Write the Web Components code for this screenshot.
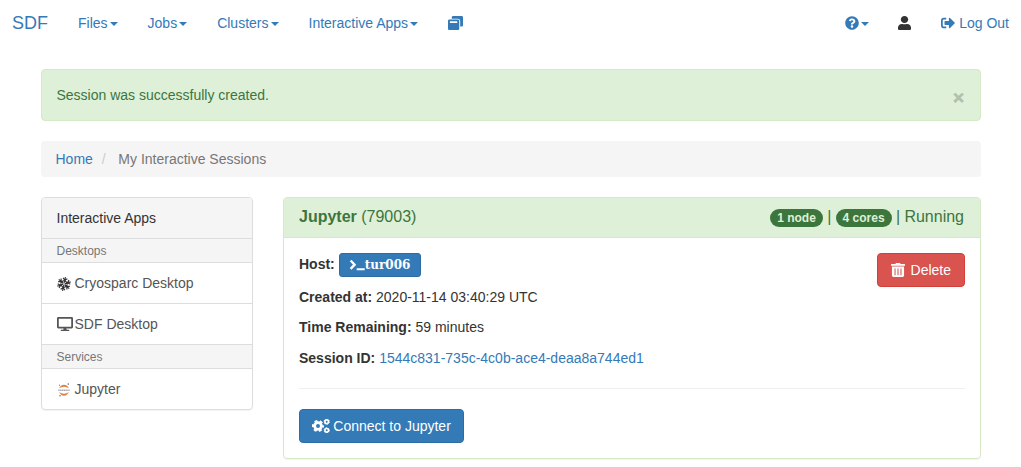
<!DOCTYPE html>
<html lang="en">
<head>
<meta charset="utf-8">
<title>My Interactive Sessions - SDF</title>
<style>
body{margin:0;background:#fff;color:#333;font:14px/20px "Liberation Sans",Arial,sans-serif;}
</style>
</head>
<body>
<sdf-page></sdf-page>
<script>
const define=(name,html)=>{
  const t=document.createElement('template');t.innerHTML=html;
  customElements.define(name,class extends HTMLElement{
    constructor(){super();this.attachShadow({mode:'open'}).append(t.content.cloneNode(true));}
  });
};

const ICONS={
 help:[512,512,'<path d="M504 256c0 136.997-111.043 248-248 248S8 392.997 8 256C8 119.083 119.043 8 256 8s248 111.083 248 248zM262.655 90c-54.497 0-89.255 22.957-116.549 63.758-3.536 5.286-2.353 12.415 2.715 16.258l34.699 26.31c5.205 3.947 12.621 3.008 16.665-2.122 17.864-22.658 30.113-35.797 57.303-35.797 20.429 0 45.698 13.148 45.698 32.958 0 14.976-12.363 22.667-32.534 33.976C247.128 238.528 216 254.941 216 296v4c0 6.627 5.373 12 12 12h56c6.627 0 12-5.373 12-12v-1.333c0-28.462 83.186-29.647 83.186-106.667 0-58.002-60.165-102-116.531-102zM256 338c-25.365 0-46 20.635-46 46 0 25.364 20.635 46 46 46s46-20.636 46-46c0-25.365-20.635-46-46-46z"/>'],
 user:[448,512,'<path d="M224 256c70.7 0 128-57.3 128-128S294.7 0 224 0 96 57.3 96 128s57.3 128 128 128zm89.6 32h-16.7c-22.2 10.2-46.9 16-72.9 16s-50.6-5.8-72.9-16h-16.7C60.2 288 0 348.2 0 422.4V464c0 26.5 21.5 48 48 48h352c26.5 0 48-21.5 48-48v-41.6c0-74.2-60.2-134.4-134.4-134.4z"/>'],
 logout:[512,512,'<path d="M497 273L329 441c-15 15-41 4.5-41-17v-96H152c-13.3 0-24-10.7-24-24v-96c0-13.3 10.7-24 24-24h136V88c0-21.4 25.9-32 41-17l168 168c9.3 9.4 9.3 24.6 0 34zM192 436v-40c0-6.6-5.4-12-12-12H96c-17.7 0-32-14.3-32-32V160c0-17.7 14.3-32 32-32h84c6.6 0 12-5.4 12-12V76c0-6.6-5.4-12-12-12H96c-53 0-96 43-96 96v192c0 53 43 96 96 96h84c6.6 0 12-5.4 12-12z"/>'],
 windows:[512,512,'<path d="M512 48v288c0 26.5-21.5 48-48 48h-48V176c0-44.1-35.9-80-80-80H128V48c0-26.5 21.5-48 48-48h288c26.5 0 48 21.5 48 48zM384 176v288c0 26.5-21.5 48-48 48H48c-26.5 0-48-21.5-48-48V176c0-26.5 21.5-48 48-48h288c26.5 0 48 21.5 48 48zm-68 28c0-6.6-5.4-12-12-12H76c-6.6 0-12 5.4-12 12v52h252v-52z"/>'],
 desktop:[576,512,'<path d="M528 0H48C21.5 0 0 21.5 0 48v320c0 26.5 21.5 48 48 48h192l-16 48h-72c-13.3 0-24 10.7-24 24s10.7 24 24 24h272c13.3 0 24-10.7 24-24s-10.7-24-24-24h-72l-16-48h192c26.5 0 48-21.5 48-48V48c0-26.5-21.5-48-48-48zm-16 352H64V64h448v288z"/>'],
 terminal:[16,12,'<path d="M1.6 1.5 5.6 5.7 1.6 9.9" fill="none" stroke="currentColor" stroke-width="2.4"/><path d="M7.7 9.3h8v1.9h-8z"/>'],
 trash:[12,14,'<path fill-rule="evenodd" d="M.5 1H3.7L4.3 0H7.7L8.3 1h3.2q.5 0 .5.5V2.7H0V1.5Q0 1 .5 1zM.8 3.6H11.2V12.6Q11.2 14 9.8 14H2.2Q.8 14 .8 12.6zM3 5.4V12.2H3.9V5.4zM5.55 5.4V12.2h.9V5.4zM8.1 5.4V12.2H9V5.4z"/>'],
 cogs:[18,14,'<g fill="none" stroke="currentColor"><circle cx="6" cy="7" r="3.4" stroke-width="2.8"/><circle cx="6" cy="7" r="5" stroke-width="2.2" stroke-dasharray="2.8 2.436" stroke-dashoffset="1.4"/><circle cx="14.7" cy="2.7" r="1.8" stroke-width="1.6"/><circle cx="14.7" cy="2.7" r="2.6" stroke-width="1" stroke-dasharray="1.5 1.223"/><circle cx="14.7" cy="11.3" r="1.8" stroke-width="1.6"/><circle cx="14.7" cy="11.3" r="2.6" stroke-width="1" stroke-dasharray="1.5 1.223"/></g>'],
 cryo:[14,14,'<g fill="none" stroke="#333" stroke-width="1.15">'+[0,60,120,180,240,300].map(a=>`<path transform="rotate(${a+12} 7 7)" d="M7 6.2V0M4.8 1.1 7 3.2 9.2 1.1M5.6 3.5 7 4.9 8.4 3.5"/>`).join('')+'</g>'],
 jupyter:[14,14,'<g fill="#df8148"><path d="M2.2 5.3Q3.6 1.7 7 1.7t4.8 3.6Q9.8 3.7 7 3.7T2.2 5.3z"/><path d="M2.2 9.1Q3.6 12.7 7 12.7t4.8-3.6Q9.8 10.7 7 10.7T2.2 9.1z"/></g><path d="M1.3 7.2H12.7" stroke="#aaa" stroke-width="1.5" stroke-dasharray="1.4 .4"/><g fill="#777"><circle cx="11.3" cy="1.1" r=".8"/><circle cx="2.5" cy="2.2" r=".6"/><circle cx="3" cy="12.7" r=".8"/></g>']
};
customElements.define('sdf-icon',class extends HTMLElement{
  connectedCallback(){
    if(this.shadowRoot)return;
    const [w,h,body]=ICONS[this.getAttribute('name')];
    this.attachShadow({mode:'open'}).innerHTML=`<style>:host{display:inline-flex;flex:none}svg{display:block;width:100%;height:100%;fill:currentColor}</style><svg viewBox="0 0 ${w} ${h}" preserveAspectRatio="none">${body}</svg>`;
  }
});

define('nav-link',`<style>
:host{display:flex;align-items:center;color:#337ab7;height:20px}
i{display:none;margin-left:2px;border-top:4px solid;border-left:4px solid transparent;border-right:4px solid transparent}
:host([caret]) i{display:block;margin-top:2px}
</style><slot></slot><i></i>`);

define('sdf-nav',`<style>
:host{display:flex;align-items:center;height:46px;padding:0 12px;box-sizing:border-box}
.brand{font-size:18px;width:66px;color:#337ab7}
.links{display:flex;gap:30px}
.right{margin-left:auto;display:flex;align-items:center;gap:29px}
.sq{width:14px;height:14px}
</style>
<div class="brand">SDF</div>
<div class="links"><nav-link caret>Files</nav-link><nav-link caret>Jobs</nav-link><nav-link caret>Clusters</nav-link><nav-link caret>Interactive Apps</nav-link><nav-link><sdf-icon class="sq" name="windows" style="width:15px"></sdf-icon></nav-link></div>
<div class="right"><nav-link caret><sdf-icon class="sq" name="help"></sdf-icon></nav-link><nav-link style="color:#333"><sdf-icon name="user" style="width:13px;height:14px;margin-right:1px"></sdf-icon></nav-link><nav-link><sdf-icon class="sq" name="logout" style="margin-right:4px"></sdf-icon>Log Out</nav-link></div>`);

define('sdf-alert',`<style>
:host{display:flex;justify-content:space-between;box-sizing:border-box;height:52px;padding:15px 15px 15px 14.5px;border:1px solid #d6e9c6;border-radius:4px;background:#dff0d8;color:#3c763d}
b{font-size:19px;line-height:26px;color:#b2c0ad;margin-right:1px;-webkit-text-stroke:.6px #b2c0ad}
</style><span><slot></slot></span><b>×</b>`);

define('sdf-breadcrumb',`<style>
:host{display:flex;height:36px;box-sizing:border-box;padding:8px 14.5px;border-radius:4px;background:#f5f5f5;color:#777;margin:20px 0}
a{color:#337ab7}i{font-style:normal;color:#ccc;margin:0 12.6px 0 9px}
</style><a>Home</a><i>/</i><span><slot></slot></span>`);

define('app-item',`<style>
:host{display:flex;align-items:center;height:41px;box-sizing:border-box;padding:0 14.5px;border-top:1px solid #ddd;color:#555}
:host([small]){height:24px;font-size:12px;background:#f5f5f5;color:#777}
:host([head]){border:0;background:#f5f5f5;color:#333;height:40px}
::slotted(sdf-icon){margin-right:4px}
</style><slot></slot>`);

define('app-list',`<style>
:host{display:block;box-sizing:border-box;width:212px;border:1px solid #ddd;border-radius:4px;overflow:hidden;box-shadow:0 1px 1px rgba(0,0,0,.05)}
</style>
<app-item head>Interactive Apps</app-item>
<app-item small>Desktops</app-item>
<app-item><sdf-icon name="cryo" style="width:14px;height:14px;margin-top:2px"></sdf-icon>Cryosparc Desktop</app-item>
<app-item><sdf-icon name="desktop" style="width:16px;height:14px;margin-right:2px"></sdf-icon>SDF Desktop</app-item>
<app-item small>Services</app-item>
<app-item><sdf-icon name="jupyter" style="width:14px;height:14px;margin-top:2px"></sdf-icon>Jupyter</app-item>`);

define('sdf-button',`<style>
:host{display:inline-flex;align-items:center;box-sizing:border-box;height:34px;padding:0 12px;border:1px solid #2e6da4;border-radius:4px;background:#337ab7;color:#fff}
:host([danger]){padding:0 13px;background:#d9534f;border-color:#d43f3a}
:host([small]){height:24px;padding:0 9.5px 0 9px;border-radius:3px;font:bold 12px/18px "DejaVu Serif",serif}
</style><slot></slot>`);

define('sdf-badge',`<style>
:host{display:inline-block;box-sizing:border-box;height:18px;padding:0 7px;border-radius:9px;background:#3c763d;color:#dff0d8;font:bold 12px/18px "Liberation Sans",sans-serif}
</style><slot></slot>`);

define('session-card',`<style>
:host{display:block;flex:1;box-sizing:border-box;height:262px;border:1px solid #d6e9c6;border-radius:4px;box-shadow:0 1px 1px rgba(0,0,0,.05);overflow:hidden}
header{display:flex;justify-content:space-between;height:39px;padding:0 16px 0 15px;background:#dff0d8;border-bottom:1px solid #d6e9c6;color:#3c763d;font-size:16px;line-height:38px}
.status{display:flex;align-items:center;height:37px}.status sdf-badge{margin-top:3px}
.status i{font-style:normal;margin:0 4.3px}
.body{padding:15px}
.top{display:flex;justify-content:space-between;height:34px}
.host{display:flex;height:24px}.host b{margin-right:4px;line-height:22px}
p{margin:0 0 10.4px}a{color:#337ab7}
hr{border:0;border-top:1px solid #eee;margin:20px 0}
</style>
<header><div><b>Jupyter</b> (79003)</div><div class="status"><sdf-badge>1 node</sdf-badge><i>|</i><sdf-badge>4 cores</sdf-badge><i>|</i>Running</div></header>
<div class="body">
<div class="top"><div class="host"><b>Host:</b><sdf-button small><sdf-icon name="terminal" style="width:16px;height:12px"></sdf-icon>tur006</sdf-button></div>
<sdf-button danger><sdf-icon name="trash" style="width:14px;height:14px;margin-right:6px"></sdf-icon>Delete</sdf-button></div>
<p><b>Created at:</b> 2020-11-14 03:40:29 UTC</p>
<p><b>Time Remaining:</b> 59 minutes</p>
<p style="margin:0"><b>Session ID:</b> <a>1544c831-735c-4c0b-ace4-deaa8a744ed1</a></p>
<hr>
<sdf-button><sdf-icon name="cogs" style="width:18px;height:14px;margin-right:3.3px"></sdf-icon>Connect to Jupyter</sdf-button>
</div>`);

define('sdf-page',`<style>
:host{display:block;height:467px;overflow:hidden}
main{width:940px;margin:23px 0 0 41px}
.cols{display:flex;gap:30px;align-items:flex-start}
</style>
<sdf-nav></sdf-nav>
<main><sdf-alert>Session was successfully created.</sdf-alert><sdf-breadcrumb>My Interactive Sessions</sdf-breadcrumb>
<div class="cols"><app-list></app-list><session-card></session-card></div></main>`);
</script>
</body>
</html>
